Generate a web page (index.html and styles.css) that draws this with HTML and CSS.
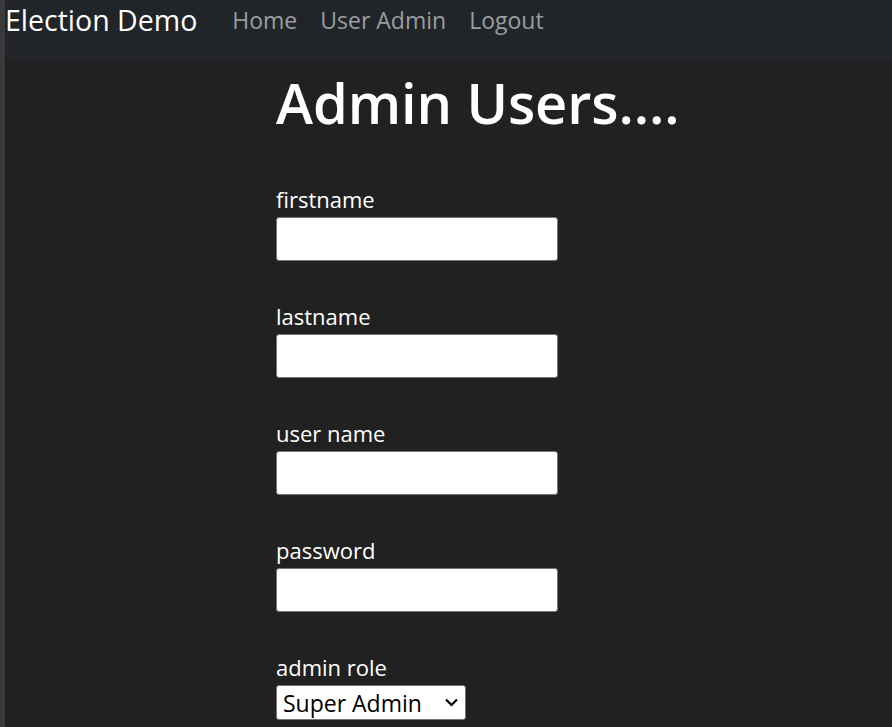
FILE: index.html
```html
<!DOCTYPE html>
<html lang="en">
<head>
<meta charset="utf-8">
<title>Election Demo</title>
<link rel="stylesheet" href="styles.css">
</head>
<body>
<nav class="navbar">
  <a class="brand" href="#">Election Demo</a>
  <ul class="nav-links">
    <li><a href="#">Home</a></li>
    <li><a href="#">User Admin</a></li>
    <li><a href="#">Logout</a></li>
  </ul>
</nav>
<main class="content">
  <h1 class="title">Admin Users....</h1>
  <form class="user-form">
    <div class="field">
      <label for="firstname">firstname</label>
      <input id="firstname" type="text">
    </div>
    <div class="field">
      <label for="lastname">lastname</label>
      <input id="lastname" type="text">
    </div>
    <div class="field">
      <label for="username">user name</label>
      <input id="username" type="text">
    </div>
    <div class="field">
      <label for="password">password</label>
      <input id="password" type="password">
    </div>
    <div class="field">
      <label for="role">admin role</label>
      <select id="role">
        <option>Super Admin</option>
        <option>Admin</option>
      </select>
    </div>
  </form>
</main>
</body>
</html>
```
FILE: styles.css
```css
html, body {
  margin: 0;
  padding: 0;
}
body {
  background: #212121;
  border-left: 5px solid #3a3a3a;
  min-height: 727px;
  box-sizing: border-box;
  font-family: "Open Sans", "Noto Sans", sans-serif;
  color: #ffffff;
  overflow: hidden;
}
.navbar {
  height: 60px;
  background: #212529;
  display: flex;
  align-items: flex-start;
  padding: 0;
}
.brand {
  color: #ffffff;
  text-decoration: none;
  font-size: 28.5px;
  line-height: 40px;
  margin-right: 35px;
}
.nav-links {
  list-style: none;
  margin: 0;
  padding: 0;
  display: flex;
  gap: 23px;
}
.nav-links a {
  color: #9b9d9f;
  text-decoration: none;
  font-size: 23px;
  line-height: 40px;
}
.content {
  padding-left: 271px;
}
.title {
  margin: 0;
  font-size: 56px;
  font-weight: 600;
  line-height: 84px;
  letter-spacing: -0.1px;
}
.user-form {
  margin-top: 42px;
  display: flex;
  flex-direction: column;
  gap: 42px;
}
.field {
  display: flex;
  flex-direction: column;
  align-items: flex-start;
}
.field label {
  font-size: 22px;
  line-height: 26px;
  margin-bottom: 5px;
}
.field input {
  width: 282px;
  height: 44px;
  box-sizing: border-box;
  border: 1px solid #767676;
  border-radius: 3px;
  background: #ffffff;
  margin: 0;
}
.field select {
  appearance: none;
  -webkit-appearance: none;
  width: 190px;
  height: 35px;
  box-sizing: border-box;
  border: 1px solid #767676;
  border-radius: 3px;
  background: #ffffff url("data:image/svg+xml;utf8,<svg xmlns='http://www.w3.org/2000/svg' width='13' height='9' viewBox='0 0 13 9'><path d='M1 1.5 L6.5 7 L12 1.5' fill='none' stroke='black' stroke-width='2.2'/></svg>") no-repeat right 7px center;
  color: #000000;
  font-family: "Open Sans", "Noto Sans", sans-serif;
  font-size: 23px;
  padding: 0 0 0 6px;
  margin: 0;
}
```
